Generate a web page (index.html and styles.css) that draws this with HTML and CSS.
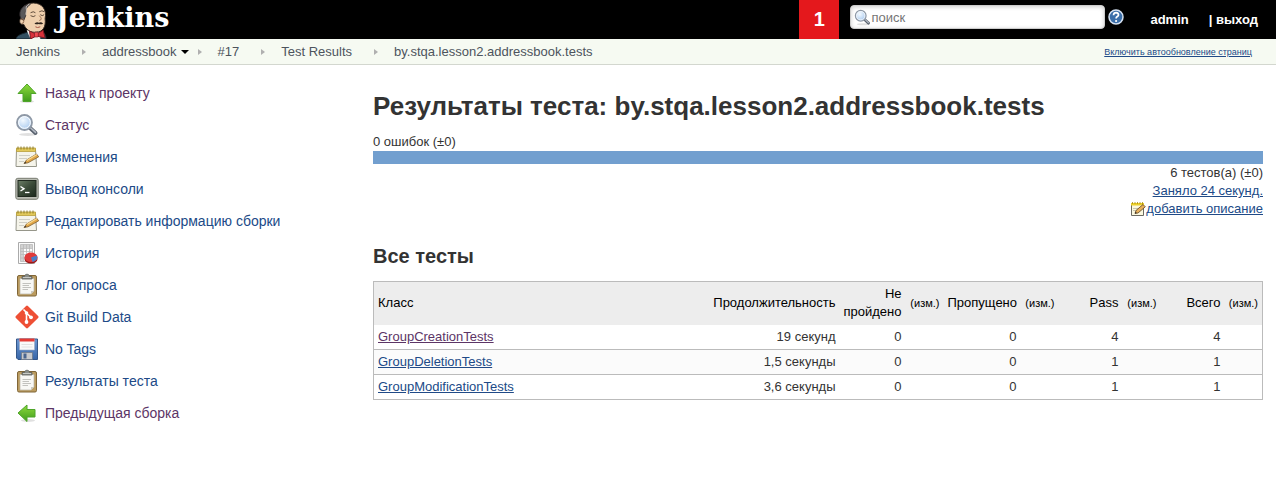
FILE: index.html
```html
<!DOCTYPE html>
<html lang="ru">
<head>
<meta charset="utf-8">
<title>by.stqa.lesson2.addressbook.tests [Jenkins]</title>
<link rel="stylesheet" href="styles.css">
</head>
<body>
<svg class="defs" aria-hidden="true">
  <defs>
    <linearGradient id="green" x1="0" y1="0" x2="0" y2="1"><stop offset="0" stop-color="#8edb3c"/><stop offset="1" stop-color="#3f9b1c"/></linearGradient>
    <linearGradient id="screen" x1="0" y1="0" x2="1" y2="1"><stop offset="0" stop-color="#6d7f68"/><stop offset=".5" stop-color="#3a4a38"/><stop offset="1" stop-color="#1c281d"/></linearGradient>
    <linearGradient id="disk" x1="0" y1="0" x2="0" y2="1"><stop offset="0" stop-color="#6d98d2"/><stop offset="1" stop-color="#3866a8"/></linearGradient>
    <radialGradient id="lens" cx=".4" cy=".35" r=".7"><stop offset="0" stop-color="#f4faff"/><stop offset="1" stop-color="#a3c6ee"/></radialGradient>
    <symbol id="i-up" viewBox="0 0 24 24"><ellipse cx="12" cy="20.500" rx="7" ry="1.500" fill="#000" opacity=".12"/><path d="M12 3 21 12.500H16V20.500H8V12.500H3Z" fill="url(#green)" stroke="#4fa52a" stroke-linejoin="round"/></symbol>
    <symbol id="i-left" viewBox="0 0 24 24"><ellipse cx="13" cy="19.500" rx="7" ry="1.500" fill="#000" opacity=".12"/><path d="M3 12 12 4V8.500H20V16H12V20.500Z" fill="url(#green)" stroke="#4fa52a" stroke-linejoin="round"/></symbol>
    <symbol id="i-search" viewBox="0 0 24 24"><ellipse cx="13" cy="21.500" rx="9" ry="1.500" fill="#000" opacity=".12"/><path d="M14.500 14.500 20.500 20" stroke="#5b6470" stroke-width="4" stroke-linecap="round"/><path d="M15.500 14.800 20.500 19.400" stroke="#b3bac4" stroke-width="1.500" stroke-linecap="round"/><circle cx="9.500" cy="9.500" r="7.500" fill="url(#lens)" stroke="#8f99a6" stroke-width="1.800"/><circle cx="9.500" cy="9.500" r="5.800" fill="none" stroke="#fff" stroke-width="1"/></symbol>
    <symbol id="i-note" viewBox="0 0 24 24"><path d="M1.500 4.500H20.500L21.500 21.500H1Z" fill="#f5f4ea" stroke="#96968a"/><path d="M1.500 3H20.500V6.500H1.500Z" fill="#e2c95a" stroke="#b9a03a" stroke-width=".8"/><path d="M3 1.500v3M6 1.500v3M9 1.500v3M12 1.500v3M15 1.500v3M18 1.500v3" stroke="#8f7f2d"/><path d="M4 10.500H15M4 13.500H12M4 16.500H9" stroke="#cfcfc6"/><path d="M9 18.500 11.500 15 21.500 9 23.700 11.800 13 17.800Z" fill="#e0a546" stroke="#80602e" stroke-width=".8"/><path d="M11.500 15 21.500 9 22.200 10 12.300 16Z" fill="#f8d88d"/><path d="M9 18.500 10.300 16.700 11.400 18Z" fill="#333"/></symbol>
    <symbol id="i-edit" viewBox="0 0 16 16"><path d="M1.500 2.500H13.500V14.500H1.500Z" fill="#fbf8df" stroke="#6b6a62"/><path d="M1 2H14V4.500H1Z" fill="#ecd02c"/><path d="M2.500 1v2M5 1v2M7.500 1v2M10 1v2M12.500 1v2" stroke="#a88c10" stroke-width=".8"/><path d="M3 7.500H9M3 9.500H7" stroke="#c8c6ae"/><path d="M5 12.500 6 9.500 13 3.500 15.300 5.800 8 12Z" fill="#e9b05a" stroke="#5e4524" stroke-width=".8"/><path d="M5 12.500 5.600 10.700 6.800 12Z" fill="#222"/></symbol>
    <symbol id="i-term" viewBox="0 0 24 24"><rect x=".8" y="1.300" width="22.400" height="21" rx="2" fill="#b9bcb3" stroke="#777b70"/><rect x="3" y="3.500" width="18" height="16" fill="url(#screen)" stroke="#20291f"/><path d="M5.500 9.500 9 11.800 5.500 14" fill="none" stroke="#fff" stroke-width="1.400"/><path d="M10 15.500H14.500" stroke="#fff" stroke-width="1.300"/></symbol>
    <symbol id="i-report" viewBox="0 0 24 24"><path d="M3.500 1.500H19.500V22.500H3.500Z" fill="#fbfbfb" stroke="#aaa"/><path d="M5.500 3.500H17.500V7H5.500ZM5.500 7H8V20.500H5.500Z" fill="#d1d1d1"/><path d="M5.500 3.500H17.500V20.500H5.500ZM8.500 3.500V20.500M11.500 3.500V20.500M14.500 3.500V20.500M5.500 7.500H17.500M5.500 10.500H17.500M5.500 13.500H17.500M5.500 17H17.500" fill="none" stroke="#b9b9b9" stroke-width=".8"/><ellipse cx="16" cy="18" rx="6.500" ry="4.500" fill="#9d1616"/><ellipse cx="16" cy="16.300" rx="6.500" ry="4.800" fill="#e03a3a"/><path d="M16 16.500 21.800 14.500A6.500 4.800 0 0 1 17.500 21Z" fill="#4a7fc8"/></symbol>
    <symbol id="i-clip" viewBox="0 0 24 24"><rect x="2.500" y="2.500" width="19" height="20.500" rx="1.500" fill="#bb9b5e" stroke="#806638"/><path d="M5 5.500H19V18L16 21H5Z" fill="#f8f8f5" stroke="#b9b6a9" stroke-width=".7"/><path d="M19 18H16V21Z" fill="#cbc9bf"/><path d="M7.500 10.500H16M7.500 12.500H14M7.500 14.500H16M7.500 16.500H13" stroke="#c2c2be"/><path d="M7 6V3.500H9.500C9.500 .5 14.500 .5 14.500 3.500H17V6Z" fill="#8b8e89" stroke="#5b5e5a" stroke-width=".8"/><path d="M8 4.500H16" stroke="#c7c9c5"/></symbol>
    <symbol id="i-git" viewBox="0 0 24 24"><rect x="3.500" y="3.500" width="17" height="17" rx="1.300" transform="rotate(45 12 12)" fill="#ee4f35"/><path d="M8.500 4.500 11.500 7.500V17M11.500 8 16 12.300" fill="none" stroke="#fff" stroke-width="1.600"/><circle cx="11.500" cy="8" r="1.800" fill="#fff"/><circle cx="11.500" cy="17" r="1.900" fill="#fff"/><circle cx="16" cy="12.300" r="1.900" fill="#fff"/></symbol>
    <symbol id="i-disk" viewBox="0 0 24 24"><path d="M1.500 2H22.500V22.500H3L1.500 21Z" fill="url(#disk)" stroke="#345789"/><path d="M4.500 2.500H19.500V13H4.500Z" fill="#fafafa" stroke="#9eafc8" stroke-width=".6"/><path d="M4.500 1.500H19.500V4.500H4.500Z" fill="#e53a34"/><path d="M6.500 7.500H17.500M6.500 10H17.500" stroke="#e2e2e2"/><path d="M6.500 15.500H17.500V22.500H6.500Z" fill="#c7c9cc" stroke="#6c7583" stroke-width=".7"/><path d="M8.500 16.500H11.500V21.500H8.500Z" fill="#49658f"/></symbol>
  </defs>
</svg>

<header class="header">
  <a class="logo" href="#">
    <svg class="logo-face" viewBox="0 0 34 38" aria-hidden="true">
      <path d="M0 38C1 34 5 33 12 31L27 31C30 32 31 35 31 38Z" fill="#335061" stroke="#17242c"/>
      <path d="M11 29 15 38H25L25 29Z" fill="#f4f3ee"/>
      <path d="M5 17C2 7 10 1 18 1C27 1 32 8 30 17C31 25 28 31 21 31C15 32 10 28 8 23C3 24 3 18 5 17Z" fill="#efd0ae" stroke="#31261f"/>
      <path d="M5 17C1 8 9 2 15 2C10 6 9 9 10 14L8 19Z" fill="#59585a" stroke="#242124" stroke-width=".8"/>
      <path d="M14 2C8 5 12 6 10 13" fill="none" stroke="#c5c1bd" stroke-width="1"/>
      <path d="M5 18Q8 16 8 20Q8 22 6 22" fill="none" stroke="#8f684c"/>
      <path d="M15 14Q18 16 20 14M25 13Q27 15 29 13M15 11Q18 9 20 11M24 10Q27 8 29 10" fill="none" stroke="#38281d" stroke-width=".8"/>
      <path d="M24 14Q28 18 24 19" fill="none" stroke="#986e50"/>
      <path d="M19 22Q22 20 23.500 21.300Q26 20 28 22.300Q25 23.300 23.500 22.500Q21 23.500 19 22Z" fill="#30251e"/>
      <path d="M20 25.500Q22 27 25 25.500" fill="none" stroke="#a65142"/>
      <path d="M14 30 21 33 28 29 30 37 21 35 15 38Z" fill="#d9323b" stroke="#771a20"/>
      <rect x="19" y="31" width="4" height="5" rx="1" fill="#f14950" stroke="#771a20" stroke-width=".7"/>
    </svg>
    <span class="logo-name">Jenkins</span>
  </a>
  <a class="alert" href="#">1</a>
  <form class="search">
    <label class="search-box">
      <svg class="search-icon" aria-hidden="true"><use href="#i-search"/></svg>
      <input type="text" placeholder="поиск" aria-label="поиск">
    </label>
    <a class="help" href="#" aria-label="Помощь">
      <svg viewBox="0 0 16 16"><circle cx="8" cy="8" r="7" fill="#3a6ea9" stroke="#d5e2f2" stroke-width="1.500"/><path d="M5.500 6.300Q5.600 3.700 8.100 3.700Q10.600 3.900 10.500 6Q10.300 7.100 9 7.800Q8.100 8.400 8.100 9.600" fill="none" stroke="#fff" stroke-width="1.700"/><circle cx="8.100" cy="12" r="1.100" fill="#fff"/></svg>
    </a>
  </form>
  <nav class="login"><a href="#">admin</a><span>| <a href="#">выход</a></span></nav>
</header>

<div class="crumb-bar">
  <nav class="crumbs">
    <a href="#">Jenkins</a><i class="sep"></i>
    <a class="crumb-open" href="#">addressbook<b class="caret"></b></a><i class="sep sep-near"></i>
    <a href="#">#17</a><i class="sep"></i>
    <a href="#">Test Results</a><i class="sep"></i>
    <a href="#">by.stqa.lesson2.addressbook.tests</a>
  </nav>
  <a class="refresh" href="#">Включить автообновление страниц</a>
</div>

<div class="page">
  <nav class="tasks">
    <a class="visited" href="#"><svg><use href="#i-up"/></svg>Назад к проекту</a>
    <a class="visited" href="#"><svg><use href="#i-search"/></svg>Статус</a>
    <a href="#"><svg><use href="#i-note"/></svg>Изменения</a>
    <a href="#"><svg><use href="#i-term"/></svg>Вывод консоли</a>
    <a href="#"><svg><use href="#i-note"/></svg>Редактировать информацию сборки</a>
    <a href="#"><svg><use href="#i-report"/></svg>История</a>
    <a href="#"><svg><use href="#i-clip"/></svg>Лог опроса</a>
    <a href="#"><svg><use href="#i-git"/></svg>Git Build Data</a>
    <a href="#"><svg><use href="#i-disk"/></svg>No Tags</a>
    <a href="#"><svg><use href="#i-clip"/></svg>Результаты теста</a>
    <a class="visited" href="#"><svg><use href="#i-left"/></svg>Предыдущая сборка</a>
  </nav>
  <main class="main">
    <h1>Результаты теста: by.stqa.lesson2.addressbook.tests</h1>
    <div>0 ошибок (±0)</div>
    <div class="bar"></div>
    <div class="summary">
      <span>6 тестов(а) (±0)</span>
      <a href="#">Заняло 24 секунд.</a>
      <a class="describe" href="#"><svg><use href="#i-edit"/></svg>добавить описание</a>
    </div>
    <h2>Все тесты</h2>
    <table class="results">
      <colgroup><col><col class="c-time"><col class="c-fail"><col class="c-diff"><col class="c-skip"><col class="c-diff"><col class="c-num"><col class="c-diff"><col class="c-num"><col class="c-diff"></colgroup>
      <thead>
        <tr><th>Класс</th><th>Продолжительность</th><th>Не пройдено</th><th class="diff">(изм.)</th><th>Пропущено</th><th class="diff">(изм.)</th><th>Pass</th><th class="diff">(изм.)</th><th>Всего</th><th class="diff">(изм.)</th></tr>
      </thead>
      <tbody>
        <tr><td><a class="visited" href="#">GroupCreationTests</a></td><td>19 секунд</td><td>0</td><td></td><td>0</td><td></td><td>4</td><td></td><td>4</td><td></td></tr>
        <tr><td><a href="#">GroupDeletionTests</a></td><td>1,5 секунды</td><td>0</td><td></td><td>0</td><td></td><td>1</td><td></td><td>1</td><td></td></tr>
        <tr><td><a href="#">GroupModificationTests</a></td><td>3,6 секунды</td><td>0</td><td></td><td>0</td><td></td><td>1</td><td></td><td>1</td><td></td></tr>
      </tbody>
    </table>
  </main>
</div>
</body>
</html>
```

FILE: styles.css
```css
* { box-sizing: border-box; }
body {
  margin: 0;
  background: #fff;
  color: #333;
  font: 13px/18px "Liberation Sans", Arial, sans-serif;
}
a { color: #204a87; }
a.visited { color: #5c3566; }
.defs { position: absolute; width: 0; height: 0; }

.header {
  display: flex;
  align-items: center;
  height: 39px;
  padding-right: 18px;
  background: #000;
  overflow: hidden;
}
.logo {
  display: flex;
  align-items: flex-end;
  gap: 7px;
  height: 39px;
  margin-right: auto;
  padding-left: 16px;
  color: #fff;
  text-decoration: none;
}
.logo-face { width: 33px; height: 37px; }
.logo-name {
  font: bold 27px/42px "DejaVu Serif", Georgia, serif;
}
.alert {
  width: 40px;
  background: #e4181c;
  color: #fff;
  font-size: 20px;
  font-weight: bold;
  line-height: 39px;
  text-align: center;
  text-decoration: none;
}
.search {
  display: flex;
  align-items: center;
  gap: 3px;
  margin: 0 26px 5px 11px;
}
.search-box {
  display: flex;
  align-items: center;
  width: 255px;
  height: 24px;
  padding: 0 3px;
  border: 1px solid #ccc;
  border-radius: 4px;
  background: #fff;
  box-shadow: inset 0 1px 4px #ccc;
}
.search-icon { width: 17px; height: 17px; flex: none; }
.search-box input {
  flex: 1;
  min-width: 0;
  padding: 0;
  border: 0;
  outline: 0;
  background: none;
  font: 13px "Liberation Sans", Arial, sans-serif;
}
.search-box input::placeholder { color: #757575; }
.help svg { display: block; width: 16px; height: 16px; }
.login {
  display: flex;
  gap: 20px;
  color: #fff;
  font-weight: bold;
}
.login a { color: #fff; text-decoration: none; }

.crumb-bar {
  display: flex;
  justify-content: space-between;
  align-items: center;
  height: 26px;
  padding: 0 24px 0 16px;
  border-bottom: 1px solid #d3d7cf;
  background: #f6faf2;
}
.crumbs { display: flex; align-items: center; }
.crumbs a { color: #4d545d; text-decoration: none; }
.sep {
  margin: 0 16px 0 22px;
  border: 3px solid transparent;
  border-left: 4px solid #b0b0b0;
  border-right: 0;
}
.sep-near { margin-left: 9px; }
.crumb-open { display: flex; align-items: center; }
.caret {
  margin-left: 4px;
  border: 4px solid transparent;
  border-top-color: #000;
  border-bottom: 0;
}
.refresh { font-size: 9px; }

.page { display: flex; padding: 12px 13px 0 15px; }
.tasks { flex: none; width: 358px; }
.tasks a {
  display: flex;
  align-items: center;
  gap: 6px;
  height: 32px;
  font-size: 14px;
  text-decoration: none;
}
.tasks svg { width: 24px; height: 24px; }
.main { flex: 1; min-width: 0; }
h1 { margin: 14px 0 12px; font-size: 26px; line-height: 30px; }
h2 { margin: 26px 0 13px; font-size: 20px; line-height: 24px; }
.bar { height: 13px; background: #729fcf; }
.summary { display: flex; flex-direction: column; align-items: flex-end; }
.describe { display: flex; align-items: center; }
.describe svg { width: 16px; height: 16px; }

.results {
  width: 100%;
  table-layout: fixed;
  border: 1px solid #bbb;
  border-collapse: collapse;
}
.c-time { width: 132px; }
.c-fail { width: 66px; }
.c-skip { width: 77px; }
.c-num { width: 64px; }
.c-diff { width: 38px; }
.results th, .results td { padding: 3px 4px; text-align: right; }
.results th:first-child, .results td:first-child { text-align: left; }
.results th { padding-bottom: 4px; background: #ededed; color: #000; font-weight: normal; }
.results .diff { font-size: 11px; white-space: nowrap; }
.results td { border-bottom: 1px solid #bbb; }
.results tbody tr:nth-child(even) { background: #fbfbfb; }
```
